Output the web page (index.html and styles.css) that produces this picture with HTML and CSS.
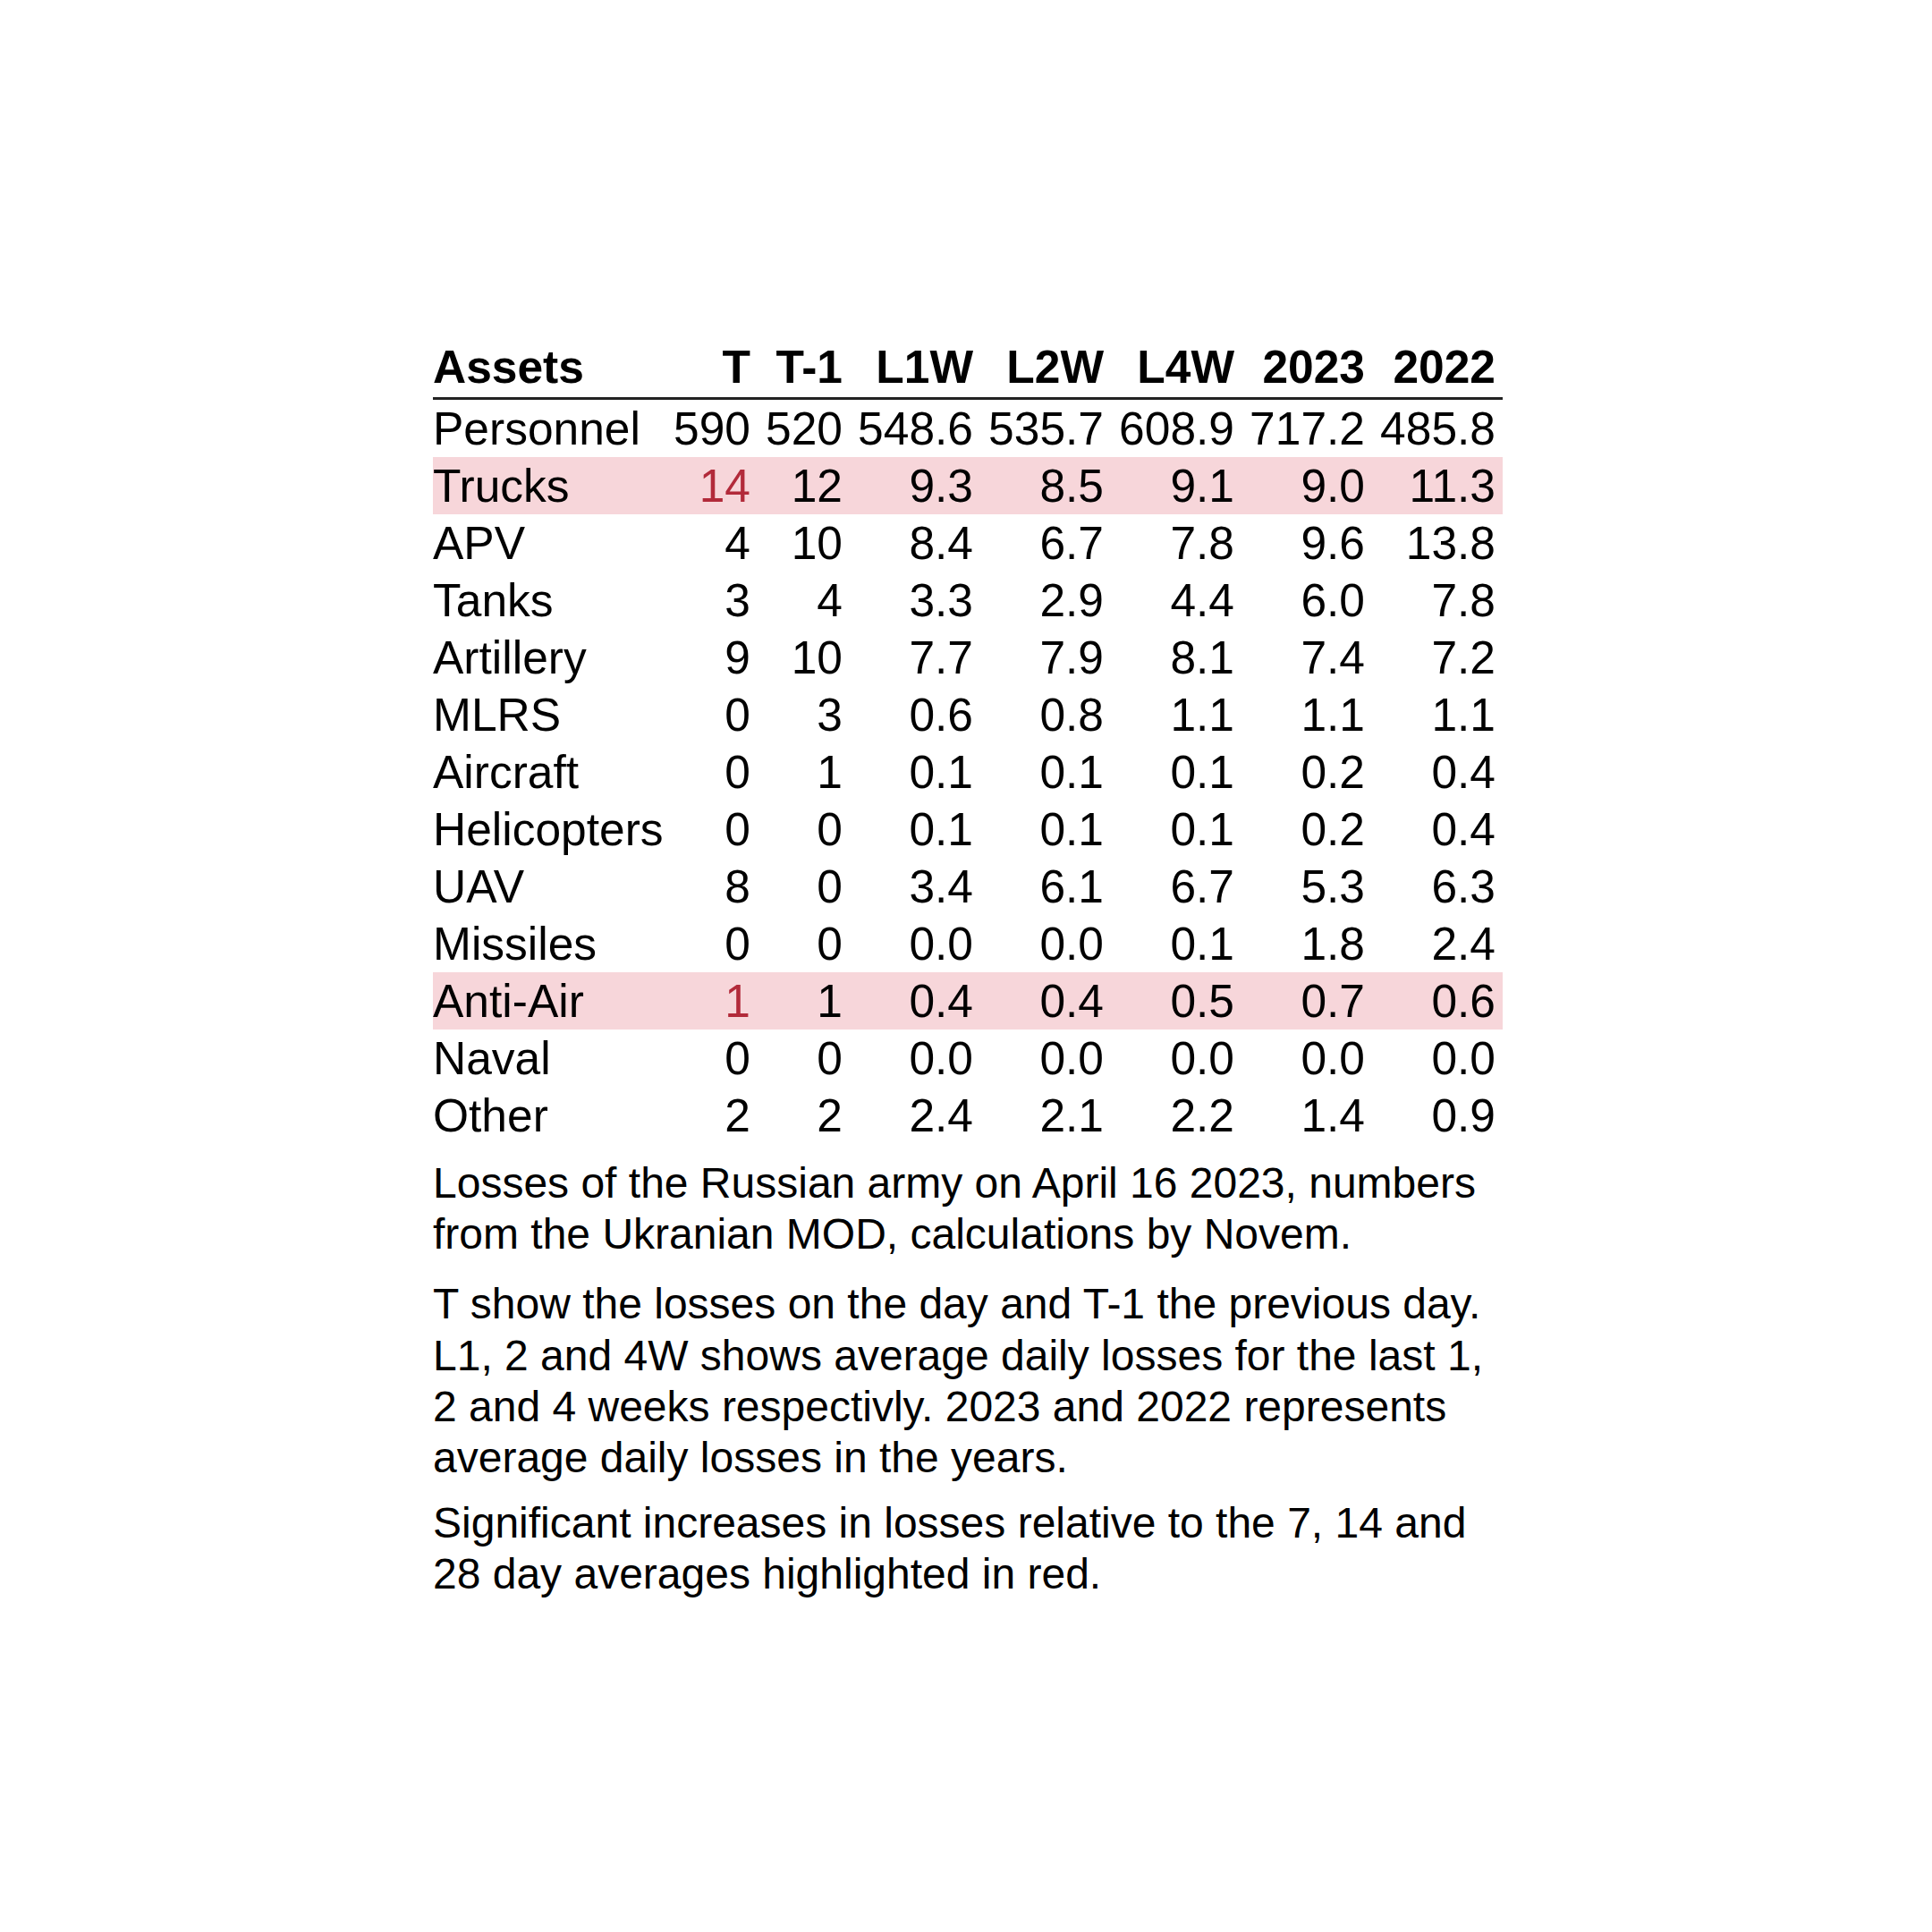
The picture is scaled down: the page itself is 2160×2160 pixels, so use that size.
FILE: index.html
```html
<!DOCTYPE html>
<html lang="en">
<head>
<meta charset="utf-8">
<title>Losses of the Russian army</title>
<link rel="stylesheet" href="styles.css">
</head>
<body>
<main class="wrap">
  <table class="losses">
    <colgroup>
      <col class="c-name">
      <col class="c-day">
      <col class="c-day">
      <col class="c-avg">
      <col class="c-avg">
      <col class="c-avg">
      <col class="c-avg">
      <col class="c-avg">
    </colgroup>
    <thead>
      <tr>
        <th class="name">Assets</th>
        <th>T</th>
        <th>T-1</th>
        <th>L1W</th>
        <th>L2W</th>
        <th>L4W</th>
        <th>2023</th>
        <th>2022</th>
      </tr>
    </thead>
    <tbody>
      <tr><td class="name">Personnel</td><td>590</td><td>520</td><td>548.6</td><td>535.7</td><td>608.9</td><td>717.2</td><td>485.8</td></tr>
      <tr class="hl"><td class="name">Trucks</td><td class="red">14</td><td>12</td><td>9.3</td><td>8.5</td><td>9.1</td><td>9.0</td><td>11.3</td></tr>
      <tr><td class="name">APV</td><td>4</td><td>10</td><td>8.4</td><td>6.7</td><td>7.8</td><td>9.6</td><td>13.8</td></tr>
      <tr><td class="name">Tanks</td><td>3</td><td>4</td><td>3.3</td><td>2.9</td><td>4.4</td><td>6.0</td><td>7.8</td></tr>
      <tr><td class="name">Artillery</td><td>9</td><td>10</td><td>7.7</td><td>7.9</td><td>8.1</td><td>7.4</td><td>7.2</td></tr>
      <tr><td class="name">MLRS</td><td>0</td><td>3</td><td>0.6</td><td>0.8</td><td>1.1</td><td>1.1</td><td>1.1</td></tr>
      <tr><td class="name">Aircraft</td><td>0</td><td>1</td><td>0.1</td><td>0.1</td><td>0.1</td><td>0.2</td><td>0.4</td></tr>
      <tr><td class="name">Helicopters</td><td>0</td><td>0</td><td>0.1</td><td>0.1</td><td>0.1</td><td>0.2</td><td>0.4</td></tr>
      <tr><td class="name">UAV</td><td>8</td><td>0</td><td>3.4</td><td>6.1</td><td>6.7</td><td>5.3</td><td>6.3</td></tr>
      <tr><td class="name">Missiles</td><td>0</td><td>0</td><td>0.0</td><td>0.0</td><td>0.1</td><td>1.8</td><td>2.4</td></tr>
      <tr class="hl"><td class="name">Anti-Air</td><td class="red">1</td><td>1</td><td>0.4</td><td>0.4</td><td>0.5</td><td>0.7</td><td>0.6</td></tr>
      <tr><td class="name">Naval</td><td>0</td><td>0</td><td>0.0</td><td>0.0</td><td>0.0</td><td>0.0</td><td>0.0</td></tr>
      <tr><td class="name">Other</td><td>2</td><td>2</td><td>2.4</td><td>2.1</td><td>2.2</td><td>1.4</td><td>0.9</td></tr>
    </tbody>
  </table>
  <p class="note note-1">Losses of the Russian army on April 16 2023, numbers from the Ukranian MOD, calculations by Novem.</p>
  <p class="note note-2">T show the losses on the day and T-1 the previous day. L1, 2 and 4W shows average daily losses for the last 1, 2 and 4 weeks respectivly. 2023 and 2022 represents average daily losses in the years.</p>
  <p class="note note-3">Significant increases in losses relative to the 7, 14 and 28 day averages highlighted in red.</p>
</main>
</body>
</html>
```

FILE: styles.css
```css
html, body {
  margin: 0;
  padding: 0;
  background: #ffffff;
}

body {
  font-family: "Liberation Sans", Arial, Helvetica, sans-serif;
  color: #000000;
}

.wrap {
  width: 1196px;
  margin: 0 0 0 484px;
  padding-top: 378px;
}

.losses {
  width: 1196px;
  table-layout: fixed;
  border-collapse: separate;
  border-spacing: 0;
  font-size: 51.5px;
}

.c-name { width: 260px; }
.c-day { width: 103px; }
.c-avg { width: 146px; }

.losses th,
.losses td {
  padding: 0 8px 0 0;
  text-align: right;
  white-space: nowrap;
  line-height: 64px;
  height: 64px;
}

.losses th {
  font-weight: 700;
  padding-bottom: 2px;
  border-bottom: 3px solid #222222;
}

.losses .name {
  text-align: left;
  padding: 0;
}

.losses th.name {
  padding-bottom: 2px;
}

.losses td {
  font-weight: 400;
}

.hl td {
  background: #f7d6da;
}

.red {
  color: #b22a3a;
}

.note {
  margin: 0;
  font-size: 48px;
  line-height: 57.2px;
}

.note-1 { margin-top: 15px; }
.note-2 { margin-top: 21px; }
.note-3 { margin-top: 16px; }
```
